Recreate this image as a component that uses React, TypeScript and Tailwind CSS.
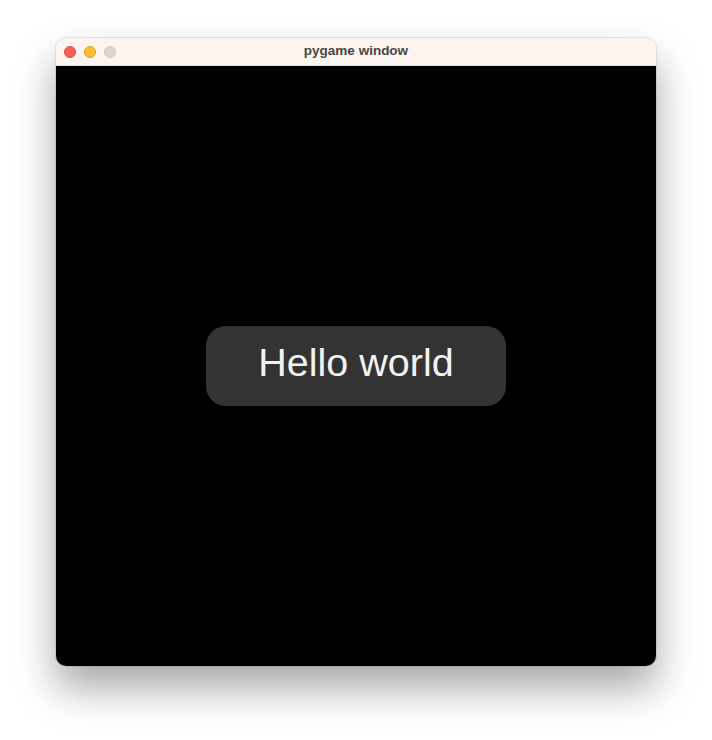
export default function App() {
  return (
    <div className="w-[712px] h-[740px] bg-white flex justify-center pt-[38px]" style={{ fontFamily: '"Liberation Sans", Arial, sans-serif' }}>
      <div className="w-[600px] h-[628px] rounded-[10px] overflow-hidden flex flex-col shadow-[0_22px_40px_rgba(0,0,0,0.35),0_0_0_1px_rgba(0,0,0,0.08)]">
        <div className="h-[28px] bg-[#fbf4ef] relative flex items-center justify-center border-b border-[#e4ddd8]">
          <div className="absolute left-[8px] top-[8px] flex gap-[8px]">
            <span className="w-[12px] h-[12px] rounded-full bg-[#fe5f57] border border-[#e24b42]" />
            <span className="w-[12px] h-[12px] rounded-full bg-[#febc2e] border border-[#dfa023]" />
            <span className="w-[12px] h-[12px] rounded-full bg-[#dcd5d2] border border-[#cdc6c3]" />
          </div>
          <span className="text-[13.5px] font-bold text-[#4a4645]">pygame window</span>
        </div>
        <div className="flex-1 bg-black flex items-center justify-center">
          <div className="w-[300px] h-[80px] rounded-[20px] bg-[#333333] flex items-center justify-center pb-[6px]">
            <span className="text-[39.5px] text-[#f2f2f2] leading-none">Hello world</span>
          </div>
        </div>
      </div>
    </div>
  );
}
